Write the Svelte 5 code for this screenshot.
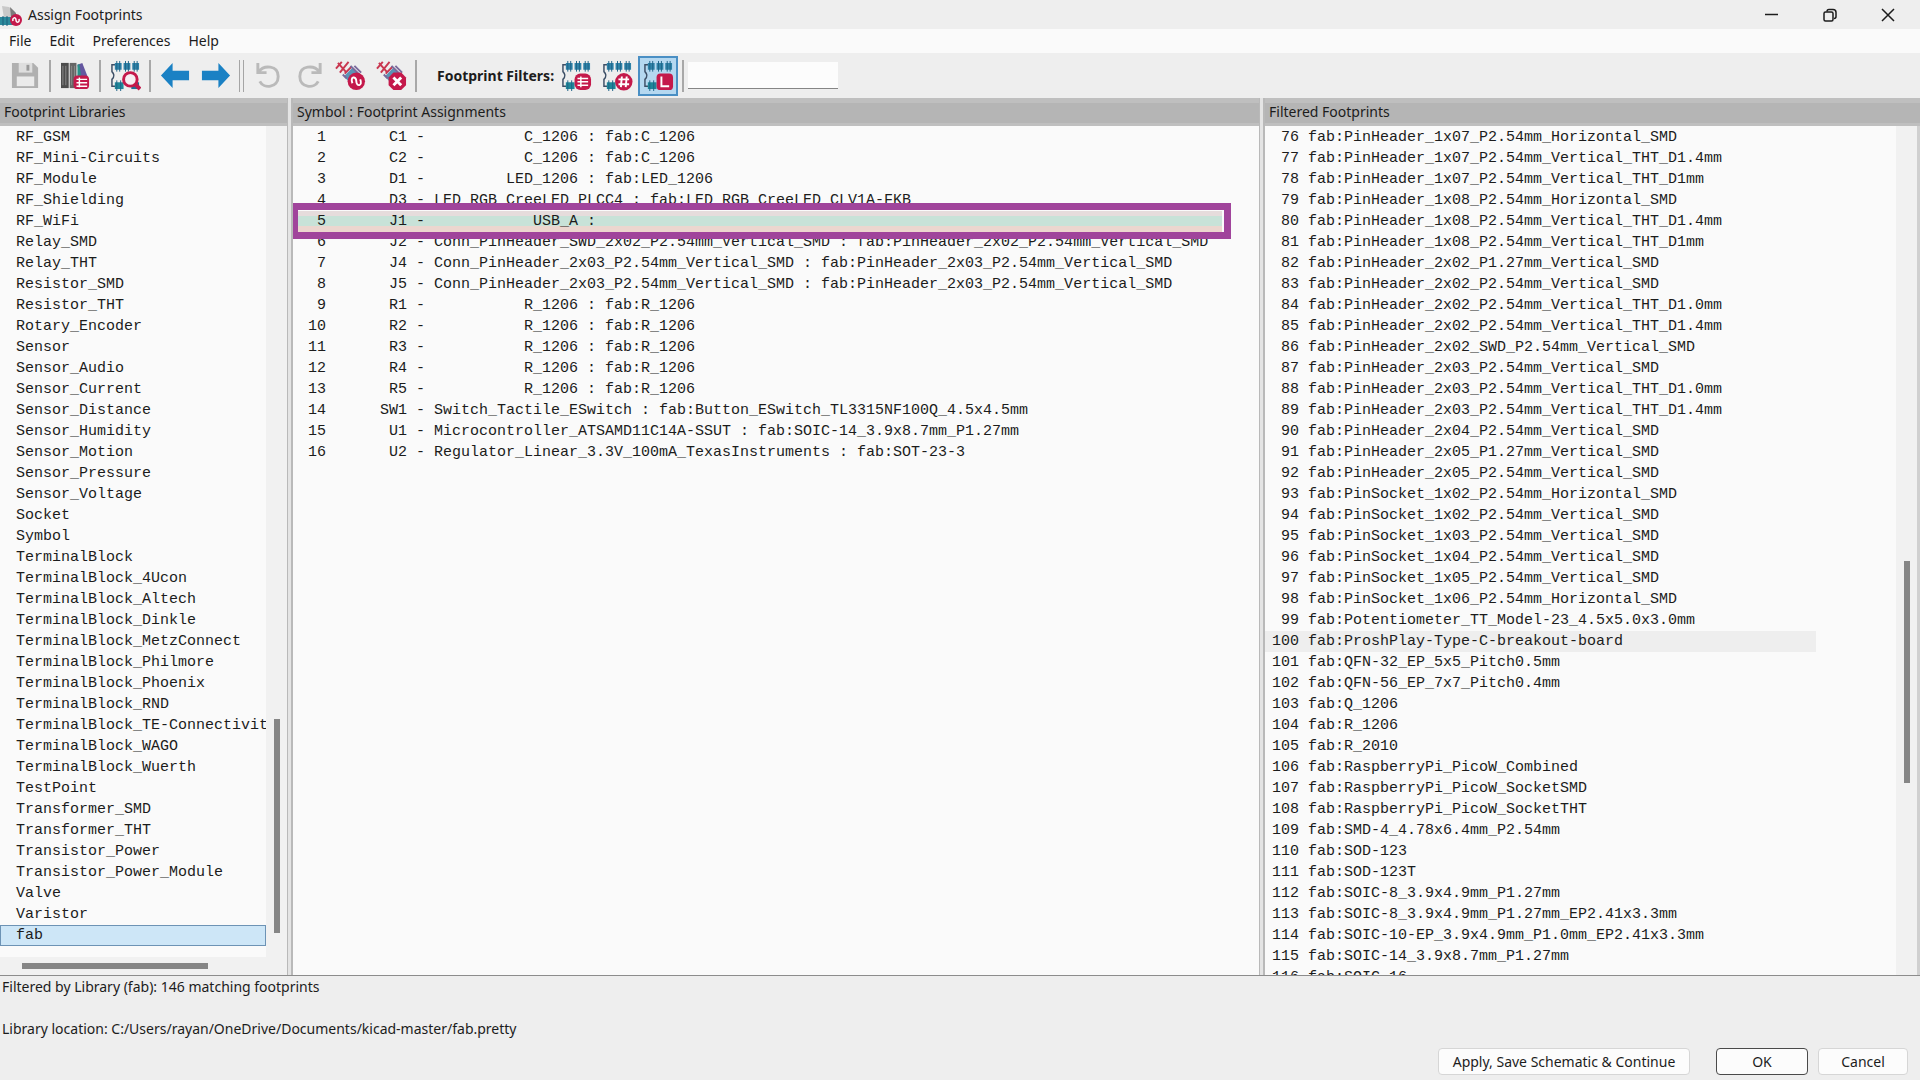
<script>
  const libraries = [
    'RF_GSM', 'RF_Mini-Circuits', 'RF_Module', 'RF_Shielding', 'RF_WiFi', 'Relay_SMD', 'Relay_THT',
    'Resistor_SMD', 'Resistor_THT', 'Rotary_Encoder', 'Sensor', 'Sensor_Audio', 'Sensor_Current',
    'Sensor_Distance', 'Sensor_Humidity', 'Sensor_Motion', 'Sensor_Pressure', 'Sensor_Voltage',
    'Socket', 'Symbol', 'TerminalBlock', 'TerminalBlock_4Ucon', 'TerminalBlock_Altech',
    'TerminalBlock_Dinkle', 'TerminalBlock_MetzConnect', 'TerminalBlock_Philmore',
    'TerminalBlock_Phoenix', 'TerminalBlock_RND', 'TerminalBlock_TE-Connectivity',
    'TerminalBlock_WAGO', 'TerminalBlock_Wuerth', 'TestPoint', 'Transformer_SMD',
    'Transformer_THT', 'Transistor_Power', 'Transistor_Power_Module', 'Valve', 'Varistor', 'fab'
  ];

  const assignments = [
    ['C1', 'C_1206', 'fab:C_1206'],
    ['C2', 'C_1206', 'fab:C_1206'],
    ['D1', 'LED_1206', 'fab:LED_1206'],
    ['D3', 'LED_RGB_CreeLED_PLCC4', 'fab:LED_RGB_CreeLED_CLV1A-FKB'],
    ['J1', 'USB_A', ''],
    ['J2', 'Conn_PinHeader_SWD_2x02_P2.54mm_Vertical_SMD', 'fab:PinHeader_2x02_P2.54mm_Vertical_SMD'],
    ['J4', 'Conn_PinHeader_2x03_P2.54mm_Vertical_SMD', 'fab:PinHeader_2x03_P2.54mm_Vertical_SMD'],
    ['J5', 'Conn_PinHeader_2x03_P2.54mm_Vertical_SMD', 'fab:PinHeader_2x03_P2.54mm_Vertical_SMD'],
    ['R1', 'R_1206', 'fab:R_1206'],
    ['R2', 'R_1206', 'fab:R_1206'],
    ['R3', 'R_1206', 'fab:R_1206'],
    ['R4', 'R_1206', 'fab:R_1206'],
    ['R5', 'R_1206', 'fab:R_1206'],
    ['SW1', 'Switch_Tactile_ESwitch', 'fab:Button_ESwitch_TL3315NF100Q_4.5x4.5mm'],
    ['U1', 'Microcontroller_ATSAMD11C14A-SSUT', 'fab:SOIC-14_3.9x8.7mm_P1.27mm'],
    ['U2', 'Regulator_Linear_3.3V_100mA_TexasInstruments', 'fab:SOT-23-3']
  ];

  const firstFootprint = 76;
  const footprints = [
    'PinHeader_1x07_P2.54mm_Horizontal_SMD', 'PinHeader_1x07_P2.54mm_Vertical_THT_D1.4mm',
    'PinHeader_1x07_P2.54mm_Vertical_THT_D1mm', 'PinHeader_1x08_P2.54mm_Horizontal_SMD',
    'PinHeader_1x08_P2.54mm_Vertical_THT_D1.4mm', 'PinHeader_1x08_P2.54mm_Vertical_THT_D1mm',
    'PinHeader_2x02_P1.27mm_Vertical_SMD', 'PinHeader_2x02_P2.54mm_Vertical_SMD',
    'PinHeader_2x02_P2.54mm_Vertical_THT_D1.0mm', 'PinHeader_2x02_P2.54mm_Vertical_THT_D1.4mm',
    'PinHeader_2x02_SWD_P2.54mm_Vertical_SMD', 'PinHeader_2x03_P2.54mm_Vertical_SMD',
    'PinHeader_2x03_P2.54mm_Vertical_THT_D1.0mm', 'PinHeader_2x03_P2.54mm_Vertical_THT_D1.4mm',
    'PinHeader_2x04_P2.54mm_Vertical_SMD', 'PinHeader_2x05_P1.27mm_Vertical_SMD',
    'PinHeader_2x05_P2.54mm_Vertical_SMD', 'PinSocket_1x02_P2.54mm_Horizontal_SMD',
    'PinSocket_1x02_P2.54mm_Vertical_SMD', 'PinSocket_1x03_P2.54mm_Vertical_SMD',
    'PinSocket_1x04_P2.54mm_Vertical_SMD', 'PinSocket_1x05_P2.54mm_Vertical_SMD',
    'PinSocket_1x06_P2.54mm_Horizontal_SMD', 'Potentiometer_TT_Model-23_4.5x5.0x3.0mm',
    'ProshPlay-Type-C-breakout-board', 'QFN-32_EP_5x5_Pitch0.5mm', 'QFN-56_EP_7x7_Pitch0.4mm',
    'Q_1206', 'R_1206', 'R_2010', 'RaspberryPi_PicoW_Combined', 'RaspberryPi_PicoW_SocketSMD',
    'RaspberryPi_PicoW_SocketTHT', 'SMD-4_4.78x6.4mm_P2.54mm', 'SOD-123', 'SOD-123T',
    'SOIC-8_3.9x4.9mm_P1.27mm', 'SOIC-8_3.9x4.9mm_P1.27mm_EP2.41x3.3mm',
    'SOIC-10-EP_3.9x4.9mm_P1.0mm_EP2.41x3.3mm', 'SOIC-14_3.9x8.7mm_P1.27mm', 'SOIC-16'
  ];

  const assignmentLine = ([ref, value, footprint], i) =>
    `${String(i + 1).padStart(3)} ${ref.padStart(8)} - ${value.padStart(16)} : ${footprint}`;

  let library = $state('fab');
  let symbol = $state('J1');
  let footprint = $state('ProshPlay-Type-C-breakout-board');
  let libraryFilter = $state(true);
  let search = $state('');
</script>

{#snippet chip()}
  <path d="M7 5H2v7q4 4 0 8v7h5" fill="none" stroke="#3d4f66" stroke-width="1.5" />
  <path d="M5 3h7v7H5zM14 3h7v7h-7zM23 3h7v7h-7z" fill="#2f83a8" />
  <path d="M7 1v11M10 1v11M16 1v11M19 1v11M25 1v11M28 1v11" stroke="#1f6488" stroke-width="1" />
  <path d="M5 23h9v7H5z" fill="#1f8799" />
  <path d="M7 21v11M11 21v11" stroke="#1f6488" stroke-width="1" />
{/snippet}

{#snippet pads()}
  <path d="M1 9l6-7M5 13l9-11M3 3l8 9M10 14l7-7" fill="none" stroke="#c93750" stroke-width="2" />
  <path d="M9 17l9-9 8 8-9 9z" fill="#5b93b5" />
  <path d="M8 15l4 4M20 6l7 7M16 6l9 9" stroke="#7a6a9c" stroke-width="2" />
{/snippet}

<div class="window">
  <header class="titlebar">
    <svg class="app-icon" viewBox="0 0 22 22" aria-hidden="true">
      <path d="M2 2l7 1 6 5v6H4z" fill="#c9c9c9" />
      <path d="M10 3l6 6v4h-5z" fill="#7c7c7c" />
      <path d="M0 13h13v8H0z" fill="#2b8a9c" />
      <path d="M3 12v10M7 12v10" stroke="#1d5e7c" />
      <circle cx="16" cy="16" r="6" fill="#c4194b" />
      <path d="M13 17c-1-4 3-4 3-1s4 3 3-1" fill="none" stroke="#fff" stroke-width="1.5" />
    </svg>
    <h1>Assign Footprints</h1>
    <div class="window-buttons">
      <button aria-label="Minimize"><svg viewBox="0 0 14 14"><path d="M0 6.500h13" /></svg></button>
      <button aria-label="Restore"><svg viewBox="0 0 14 14"><rect x="1" y="4" width="9" height="9" rx="1.500" /><path d="M4 3.500Q4 1.500 6 1.500h4q3 0 3 3v4q0 2-2 2" /></svg></button>
      <button aria-label="Close"><svg viewBox="0 0 14 14"><path d="M1 1l12 12M13 1L1 13" /></svg></button>
    </div>
  </header>

  <nav class="menubar">
    <button>File</button>
    <button>Edit</button>
    <button>Preferences</button>
    <button>Help</button>
  </nav>

  <div class="toolbar" role="toolbar" aria-label="Main toolbar">
    <button class="tool" aria-label="Save" disabled>
      <svg viewBox="0 0 32 32">
        <path d="M2 3h22l5 5v21H2z" fill="#b0b0b0" />
        <path d="M9 3h14v10H9z" fill="#dedede" /><path d="M17 5h3v6h-3z" fill="#999" />
        <path d="M7 17h18v10H7z" fill="#ebebeb" />
      </svg>
    </button>
    <span class="sep"></span>
    <button class="tool" aria-label="Manage footprint libraries">
      <svg viewBox="0 0 32 32">
        <path d="M1 3h8v26H1z" fill="#4d4d4d" /><path d="M10 3h7v26h-7z" fill="#666" />
        <path d="M3 6v20M6 6v20M12 6v20M15 6v20" stroke="#8b8b8b" />
        <path d="M18 5l5-2 7 18h-9z" fill="#6457a0" /><path d="M18 5l2-1 2 14h-4z" fill="#2a9088" />
        <rect x="14" y="16" width="16" height="14" rx="4" fill="#c4194b" />
        <path d="M17 20h11M17 23.500h11M17 27h11M20 18v10" stroke="#fff" stroke-width="1.500" />
      </svg>
    </button>
    <span class="sep"></span>
    <button class="tool" aria-label="View selected footprint">
      <svg viewBox="0 0 32 32">
        {@render chip()}
        <path d="M22 23h8v7h-8z" fill="#1f6f96" />
        <circle cx="21" cy="20" r="7" fill="#f6eef2" stroke="#c4194b" stroke-width="3" />
        <path d="M26 25l5 5" stroke="#c4194b" stroke-width="4" />
      </svg>
    </button>
    <span class="sep"></span>
    <button class="tool" aria-label="Previous unassigned symbol">
      <svg viewBox="0 0 32 32"><path d="M1 16L13 3v8h17v10H13v8z" fill="#1a81c4" /></svg>
    </button>
    <button class="tool" aria-label="Next unassigned symbol">
      <svg viewBox="0 0 32 32"><path d="M31 16L19 3v8H2v10h17v8z" fill="#1a81c4" /></svg>
    </button>
    <span class="sep double"></span>
    <div class="edits">
      <button class="tool" aria-label="Undo" disabled>
        <svg viewBox="0 0 32 32"><path d="M5 3v10h9M6 12C11 5 26 5 26 17c0 12-15 13-19 5" fill="none" stroke="#bababa" stroke-width="3" /></svg>
      </button>
      <button class="tool" aria-label="Redo" disabled>
        <svg viewBox="0 0 32 32"><path d="M27 3v10h-9M26 12C21 5 6 5 6 17c0 12 15 13 19 5" fill="none" stroke="#bababa" stroke-width="3" /></svg>
      </button>
      <button class="tool" aria-label="Automatically associate footprints">
        <svg viewBox="0 0 32 32">
          {@render pads()}
          <circle cx="22" cy="22" r="9" fill="#c4194b" />
          <path d="M18 24c-3-7 4-8 4-2s7 5 4-2" fill="none" stroke="#fff" stroke-width="2" />
        </svg>
      </button>
      <button class="tool" aria-label="Delete all associations">
        <svg viewBox="0 0 32 32">
          {@render pads()}
          <path d="M18 13h8l5 5v8l-5 5h-8l-5-5v-8z" fill="#c4194b" />
          <path d="M18 18l8 8M26 18l-8 8" stroke="#fff" stroke-width="3" />
        </svg>
      </button>
    </div>
    <span class="sep"></span>
    <strong class="filter-label">Footprint Filters:</strong>
    <div class="filters">
      <button class="tool" aria-label="Filter by symbol footprint filters">
        <svg viewBox="0 0 32 32">
          {@render chip()}
          <rect x="14" y="14" width="17" height="17" rx="6" fill="#c4194b" />
          <path d="M17 19h11M17 22.500h11M17 26h11M20.500 17v11" stroke="#fff" stroke-width="1.500" />
        </svg>
      </button>
      <button class="tool" aria-label="Filter by pin count">
        <svg viewBox="0 0 32 32">
          {@render chip()}
          <circle cx="22.500" cy="22.500" r="9" fill="#c4194b" />
          <path d="M17 20h11M17 25h11M20.500 17l-1 11M25.500 17l-1 11" stroke="#fff" stroke-width="2" />
        </svg>
      </button>
      <button class="tool" class:pressed={libraryFilter} aria-pressed={libraryFilter} aria-label="Filter by library" onclick={() => (libraryFilter = !libraryFilter)}>
        <svg viewBox="0 0 32 32">
          {@render chip()}
          <rect x="14" y="14" width="17" height="17" rx="4" fill="#c4194b" />
          <path d="M19 17v10h8" fill="none" stroke="#fff" stroke-width="2" />
        </svg>
      </button>
    </div>
    <span class="sep"></span>
    <input class="search" type="text" aria-label="Filter footprints" bind:value={search} />
  </div>

  <main class="panes">
    <section class="pane">
      <h2>Footprint Libraries</h2>
      <div class="view">
        <ul class="rows libraries">
          {#each libraries as name}
            <li><button class:selected={name === library} onclick={() => (library = name)}>{name}</button></li>
          {/each}
        </ul>
        <div class="vbar libraries-bar"><span class="thumb"></span></div>
        <div class="hbar"><span class="thumb"></span></div>
      </div>
    </section>
    <div class="splitter"></div>
    <section class="pane">
      <h2>Symbol : Footprint Assignments</h2>
      <div class="view single">
        <ul class="rows assignments">
          {#each assignments as row, i}
            <li class:marked={row[0] === 'J1'}>
              <button class:selected={row[0] === symbol} onclick={() => (symbol = row[0])}>{assignmentLine(row, i)}</button>
            </li>
          {/each}
        </ul>
      </div>
    </section>
    <div class="splitter"></div>
    <section class="pane last">
      <h2>Filtered Footprints</h2>
      <div class="view">
        <ul class="rows footprints">
          {#each footprints as name, i}
            <li>
              <button class:selected={name === footprint} onclick={() => (footprint = name)}>{String(firstFootprint + i).padStart(3)} fab:{name}</button>
            </li>
          {/each}
        </ul>
        <div class="vbar footprints-bar"><span class="thumb"></span></div>
      </div>
    </section>
  </main>

  <footer>
    <p>Filtered by Library (fab): 146 matching footprints</p>
    <p>Library location: C:/Users/rayan/OneDrive/Documents/kicad-master/fab.pretty</p>
    <div class="actions">
      <button class="apply">Apply, Save Schematic &amp; Continue</button>
      <button class="ok">OK</button>
      <button class="cancel">Cancel</button>
    </div>
  </footer>
</div>

<style>
  :global(body) {
    background: #eee;
  }

  .window {
    display: flex;
    flex-direction: column;
    height: 100vh;
    overflow: hidden;
    background: #eee;
    color: #1c1c1c;
    font: 14px/20px 'Noto Sans', 'Open Sans', sans-serif;
  }

  button {
    margin: 0;
    padding: 0;
    border: 0;
    background: none;
    color: inherit;
    font: inherit;
  }

  h1, h2, p, ul {
    margin: 0;
    padding: 0;
    font: inherit;
    list-style: none;
  }

  .titlebar {
    display: flex;
    flex: none;
    align-items: center;
    height: 29px;
    padding-right: 3px;
    gap: 6px;
  }

  .app-icon {
    width: 22px;
    height: 22px;
  }

  .window-buttons {
    display: flex;
    margin-left: auto;
  }

  .window-buttons button {
    display: grid;
    place-items: center;
    width: 58px;
    height: 28px;
  }

  .window-buttons svg {
    width: 14px;
    height: 14px;
    fill: none;
    stroke: #1c1c1c;
    stroke-width: 1.5;
  }

  .menubar {
    display: flex;
    flex: none;
    align-items: center;
    height: 24px;
    padding-left: 9px;
    gap: 18px;
    background: #fafafa;
  }

  .toolbar {
    display: flex;
    flex: none;
    align-items: center;
    height: 45px;
    padding-left: 5px;
  }

  .edits,
  .filters {
    display: flex;
    gap: 1px;
  }

  .tool {
    display: grid;
    flex: none;
    place-items: center;
    width: 40px;
    height: 40px;
  }

  .tool svg {
    width: 31px;
    height: 31px;
  }

  .tool.pressed {
    border: 2px solid #4a8fc4;
    background: #b5d8f0;
  }

  .sep {
    flex: none;
    width: 2px;
    height: 32px;
    margin: 0 4px;
    background: #a8a8a8;
  }

  .sep.double {
    width: 3px;
    border: solid #a5a5a5;
    border-width: 0 1px;
    background: none;
  }

  .filter-label {
    width: 119px;
    margin-left: 16px;
    white-space: nowrap;
  }

  .search {
    box-sizing: border-box;
    width: 150px;
    height: 27px;
    padding: 0 6px;
    border: 0;
    border-bottom: 1px solid #858585;
    background: #fcfcfc;
    font: inherit;
  }

  .panes {
    display: grid;
    flex: 1;
    grid-template-columns: minmax(0, 287fr) 6px minmax(0, 966fr) 6px minmax(0, 655fr);
    min-height: 0;
    border-bottom: 1px solid #8c8c8c;
  }

  .pane {
    display: flex;
    flex-direction: column;
    min-width: 0;
    min-height: 0;
  }

  .pane.last .view {
    border-right: 3px solid #d0d0d0;
  }

  h2 {
    flex: none;
    height: 20px;
    padding-left: 4px;
    border: solid #bfbfbf;
    border-width: 5px 0 3px;
    background: #b5b5b5;
    line-height: 18px;
  }

  .splitter {
    box-sizing: border-box;
    border: solid #b9b9b9;
    border-width: 0 2px 0 1px;
    background: #e4e4e4;
  }

  .view {
    display: grid;
    flex: 1;
    grid-template-columns: minmax(0, 1fr) 21px;
    grid-template-rows: minmax(0, 1fr) auto;
    min-height: 0;
    background: #fafafa;
  }

  .view.single {
    grid-template-columns: minmax(0, 1fr);
  }

  .rows {
    padding-top: 1px;
    overflow: hidden;
    font: 15px/21px 'Liberation Mono', monospace;
  }

  .rows button {
    display: block;
    width: 100%;
    height: 21px;
    overflow: hidden;
    text-align: left;
    white-space: pre;
  }

  .libraries button {
    padding-left: 16px;
  }

  .libraries .selected {
    box-shadow: inset 0 0 0 1px #6d93b5;
    background: #cde6f7;
  }

  .assignments button {
    padding-left: 6px;
  }

  .assignments .selected {
    width: calc(100% - 37px);
    background: linear-gradient(#e6dcdc 0 5px, #c8e2d8 5px 15px, #ecd6cf 15px);
  }

  .marked {
    position: relative;
  }

  .marked::after {
    position: absolute;
    inset: -8px 28px -7px -2px;
    border: 7px solid #a0449b;
    content: '';
    pointer-events: none;
  }

  .footprints button {
    width: calc(100% - 80px);
    padding-left: 7px;
  }

  .footprints .selected {
    background: #eee;
  }

  .vbar {
    display: flex;
    flex-direction: column;
    align-items: center;
    background: #f1f1f1;
  }

  .hbar {
    display: flex;
    grid-column: 1 / -1;
    align-items: center;
    height: 18px;
    padding-left: 22px;
    background: #f1f1f1;
  }

  .thumb {
    background: #868686;
  }

  .vbar .thumb {
    width: 6px;
  }

  .libraries-bar::before {
    flex: 592 0 0;
    content: '';
  }

  .libraries-bar .thumb {
    flex: 214 0 0;
  }

  .libraries-bar::after {
    flex: 24 0 0;
    content: '';
  }

  .footprints-bar::before {
    flex: 434 0 0;
    content: '';
  }

  .footprints-bar .thumb {
    flex: 222 0 0;
  }

  .footprints-bar::after {
    flex: 192 0 0;
    content: '';
  }

  .hbar .thumb {
    width: 70%;
    height: 6px;
  }

  footer {
    display: flex;
    flex: none;
    flex-direction: column;
    padding: 1px 12px 5px 2px;
  }

  footer p + p {
    margin-top: 22px;
  }

  .actions {
    display: flex;
    justify-content: flex-end;
    margin-top: 9px;
  }

  .actions button {
    box-sizing: border-box;
    height: 27px;
    border: 1px solid #d6d6d6;
    border-radius: 4px;
    background: #fcfcfc;
  }

  .apply {
    width: 252px;
  }

  .actions .ok {
    width: 92px;
    margin: 0 10px 0 26px;
    border-color: #4a4a4a;
  }

  .cancel {
    width: 90px;
  }
</style>
